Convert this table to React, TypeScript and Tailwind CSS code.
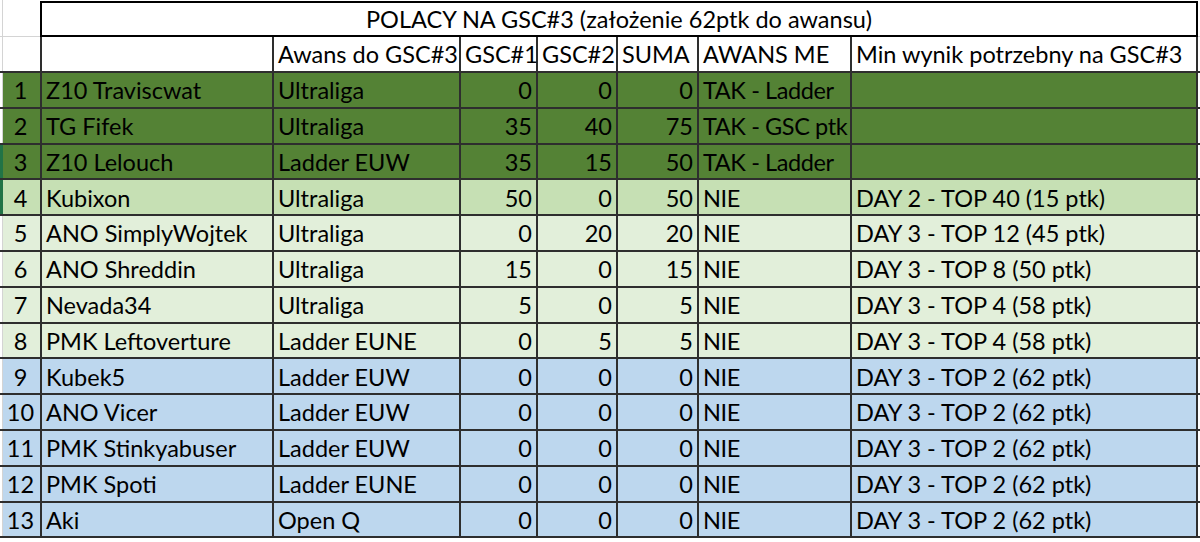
import React from 'react'

type Row = {
  n: number
  name: string
  awans: string
  g1: number
  g2: number
  suma: number
  me: string
  min: string
  bg: string
  mark?: boolean
}

const DARK = 'bg-[#548235]'
const MID = 'bg-[#c6e0b4]'
const LIGHT = 'bg-[#e2efda]'
const BLUE = 'bg-[#bdd7ee]'

const rows: Row[] = [
  { n: 1, name: 'Z10 Traviscwat', awans: 'Ultraliga', g1: 0, g2: 0, suma: 0, me: 'TAK - Ladder', min: '', bg: DARK },
  { n: 2, name: 'TG Fifek', awans: 'Ultraliga', g1: 35, g2: 40, suma: 75, me: 'TAK - GSC ptk', min: '', bg: DARK },
  { n: 3, name: 'Z10 Lelouch', awans: 'Ladder EUW', g1: 35, g2: 15, suma: 50, me: 'TAK - Ladder', min: '', bg: DARK, mark: true },
  { n: 4, name: 'Kubixon', awans: 'Ultraliga', g1: 50, g2: 0, suma: 50, me: 'NIE', min: 'DAY 2 - TOP 40 (15 ptk)', bg: MID, mark: true },
  { n: 5, name: 'ANO SimplyWojtek', awans: 'Ultraliga', g1: 0, g2: 20, suma: 20, me: 'NIE', min: 'DAY 3 - TOP 12 (45 ptk)', bg: LIGHT },
  { n: 6, name: 'ANO Shreddin', awans: 'Ultraliga', g1: 15, g2: 0, suma: 15, me: 'NIE', min: 'DAY 3 - TOP 8 (50 ptk)', bg: LIGHT },
  { n: 7, name: 'Nevada34', awans: 'Ultraliga', g1: 5, g2: 0, suma: 5, me: 'NIE', min: 'DAY 3 - TOP 4 (58 ptk)', bg: LIGHT },
  { n: 8, name: 'PMK Leftoverture', awans: 'Ladder EUNE', g1: 0, g2: 5, suma: 5, me: 'NIE', min: 'DAY 3 - TOP 4 (58 ptk)', bg: LIGHT },
  { n: 9, name: 'Kubek5', awans: 'Ladder EUW', g1: 0, g2: 0, suma: 0, me: 'NIE', min: 'DAY 3 - TOP 2 (62 ptk)', bg: BLUE },
  { n: 10, name: 'ANO Vicer', awans: 'Ladder EUW', g1: 0, g2: 0, suma: 0, me: 'NIE', min: 'DAY 3 - TOP 2 (62 ptk)', bg: BLUE },
  { n: 11, name: 'PMK Stinkyabuser', awans: 'Ladder EUW', g1: 0, g2: 0, suma: 0, me: 'NIE', min: 'DAY 3 - TOP 2 (62 ptk)', bg: BLUE },
  { n: 12, name: 'PMK Spoti', awans: 'Ladder EUNE', g1: 0, g2: 0, suma: 0, me: 'NIE', min: 'DAY 3 - TOP 2 (62 ptk)', bg: BLUE },
  { n: 13, name: 'Aki', awans: 'Open Q', g1: 0, g2: 0, suma: 0, me: 'NIE', min: 'DAY 3 - TOP 2 (62 ptk)', bg: BLUE },
]

function Cell({
  w,
  align = 'left',
  tight,
  children,
}: {
  w: string
  align?: 'left' | 'right' | 'center'
  tight?: boolean
  children?: React.ReactNode
}) {
  const justify = align === 'right' ? 'justify-end pr-[4px]' : align === 'center' ? 'justify-center pr-[2px]' : 'justify-start pl-[4px]'
  return (
    <div
      className={`${w} flex h-full shrink-0 items-center overflow-visible whitespace-nowrap border-r-2 border-[#2e2e2e] pt-[2px] ${justify} ${tight ? 'tracking-[-0.4px]' : ''}`}
    >
      {children}
    </div>
  )
}

function Columns({ r }: { r?: Row }) {
  return (
    <>
      <Cell w="w-[39px]" align="center">{r?.n}</Cell>
      <Cell w="w-[232px]">{r?.name}</Cell>
      <Cell w="w-[187px]">{r?.awans}</Cell>
      <Cell w="w-[77px]" align="right">{r?.g1}</Cell>
      <Cell w="w-[80px]" align="right">{r?.g2}</Cell>
      <Cell w="w-[81px]" align="right">{r?.suma}</Cell>
      <Cell w="w-[153px]" tight>{r?.me}</Cell>
      <Cell w="w-[346px]">{r?.min}</Cell>
    </>
  )
}

export default function App() {
  return (
    <div
      className="h-[542px] w-[1200px] overflow-hidden bg-white text-[23.5px] leading-none text-black"
      style={{ fontFamily: 'Lato, "Open Sans", sans-serif' }}
    >
      {/* title */}
      <div className="flex h-[37px] border-b border-[#d4d4d4]">
        <div className="w-[3px] shrink-0 border-r border-[#d4d4d4]" />
        <div className="w-[37px] shrink-0" />
        <div className="mt-[1px] flex h-[36px] w-[1158px] shrink-0 items-center justify-center border-2 border-black pt-[2px]">
          POLACY NA GSC#3 (założenie 62ptk do awansu)
        </div>
        <div className="flex-1" />
      </div>

      {/* header */}
      <div className="flex h-[36px] border-b-2 border-[#2e2e2e] bg-white">
        <div className="w-[3px] shrink-0 border-r border-[#d4d4d4]" />
        <div className="h-full w-[37px] shrink-0" />
        <div className="h-full w-[2px] shrink-0 bg-[#2e2e2e]" />
        <Cell w="w-[232px]" />
        <Cell w="w-[187px]">Awans do GSC#3</Cell>
        <Cell w="w-[77px]">GSC#1</Cell>
        <Cell w="w-[80px]">GSC#2</Cell>
        <Cell w="w-[81px]">SUMA</Cell>
        <Cell w="w-[153px]">AWANS ME</Cell>
        <Cell w="w-[346px]">Min wynik potrzebny na GSC#3</Cell>
      </div>

      {rows.map((r) => (
        <div key={r.n} className="flex h-[35.8px] border-b-2 border-[#2e2e2e]">
          <div className={`w-[3px] shrink-0 ${r.mark ? 'bg-[#217346]' : 'border-r border-[#d4d4d4] bg-white'}`} />
          <div className={`flex ${r.bg}`}>
            <Columns r={r} />
          </div>
          <div className="flex-1 bg-white" />
        </div>
      ))}
    </div>
  )
}
